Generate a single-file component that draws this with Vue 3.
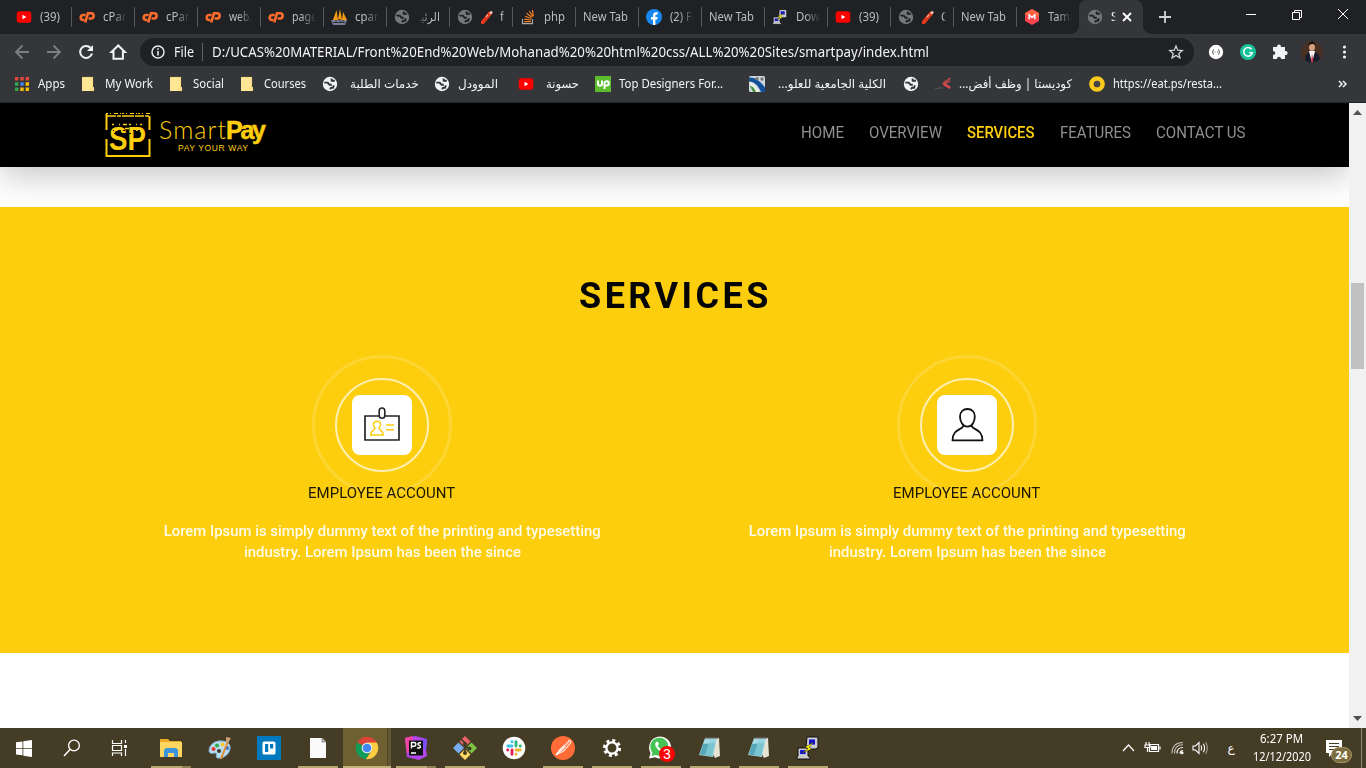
<script setup>
const tabs = [
  { icon: 'youtube', label: '(39)', w: 20 },
  { icon: 'cpanel', label: 'cPan', w: 26 },
  { icon: 'cpanel', label: 'cPan', w: 26 },
  { icon: 'cpanel', label: 'web.', w: 23 },
  { icon: 'cpanel', label: 'page', w: 25 },
  { icon: 'pma', label: 'cpan', w: 26 },
  { icon: 'globe-dim', label: 'الرئيـ', w: 22, rtl: true },
  { icon: 'globe-dim', label: 'f', w: 4, knife: true },
  { icon: 'stack', label: 'php', w: 21 },
  { label: 'New Tab', w: 45 },
  { icon: 'facebook', label: '(2) Fa', w: 28 },
  { label: 'New Tab', w: 45 },
  { icon: 'putty', label: 'Dow', w: 24 },
  { icon: 'youtube', label: '(39)', w: 20 },
  { icon: 'globe-dim', label: 'C', w: 7, knife: true },
  { label: 'New Tab', w: 45 },
  { icon: 'tamkeen', label: 'Tamk', w: 28 },
]

const bookmarks = [
  { icon: 'apps', label: 'Apps', box: 67, w: 27 },
  { icon: 'folder', label: 'My Work', box: 88, w: 48 },
  { icon: 'folder', label: 'Social', box: 71, w: 31 },
  { icon: 'folder', label: 'Courses', box: 82, w: 42 },
  { icon: 'globe', label: 'خدمات الطلبة', box: 112, w: 69, shift: 4 },
  { icon: 'globe', label: 'الموودل', box: 84, w: 40 },
  { icon: 'youtube', label: 'حسونة', box: 77, w: 33, shift: 4 },
  { icon: 'upwork', label: 'Top Designers For...', box: 154, w: 104 },
  { icon: 'college', label: 'الكلية الجامعية للعلو...', box: 154, w: 108, shift: 5 },
  { icon: 'globe', label: '', box: 32, w: 0 },
  { icon: 'codista', label: 'كوديستا | وظف أفض...', box: 154, w: 113 },
  { icon: 'ring', label: 'https://eat.ps/resta...', box: 140, w: 109 },
]

const menu = [
  { label: 'HOME', w: 43 },
  { label: 'OVERVIEW', w: 73 },
  { label: 'SERVICES', w: 67.5, on: true },
  { label: 'FEATURES', w: 71 },
  { label: 'CONTACT US', w: 89.5 },
]

const cards = ['badge', 'person']

const apps = [
  { icon: 'explorer', split: true },
  { icon: 'paint', idle: true },
  { icon: 'trello', idle: true },
  { icon: 'doc' },
  { icon: 'chrome', active: true },
  { icon: 'phpstorm', split: true },
  { icon: 'git' },
  { icon: 'slack', idle: true },
  { icon: 'postman' },
  { icon: 'gear' },
  { icon: 'whatsapp', count: 3 },
  { icon: 'notepad' },
  { icon: 'notepad' },
  { icon: 'putty' },
]

// Scales a label horizontally to the requested width.
const vFit = {
  mounted(el, { value }) {
    const natural = el.getBoundingClientRect().width
    if (natural && value) el.style.transform = `scaleX(${value / natural})`
  },
}
</script>

<template>
  <svg class="defs" width="0" height="0">
    <symbol id="youtube" viewBox="0 0 16 16"><rect x=".7" y="2.300" width="14.600" height="11.400" rx="2.600" fill="#f00" /><path d="M6.500 5.800v4.400L10.300 8z" fill="#fff" /></symbol>
    <symbol id="cpanel" viewBox="0 0 16 16"><g fill="none" stroke="#ff6c2c" stroke-width="2.6"><path d="M6.6 6H4.2a2.4 2.4 0 0 0 0 5h1.2" /><path d="M6.2 13.500 9 4.2h3a2.500 2.500 0 0 1 0 5.300H9.6" /></g></symbol>
    <symbol id="pma" viewBox="0 0 16 16"><path d="M5.500 1 2 11h5zM9 0 7 10l4 1zM12 3l-1 8h5z" fill="#f89c0e" /><path d="M0 11h16l-2 5H2z" fill="#7a7d9c" /><path d="M2 13.500h12M5 11v3M9 11v3M12 11v3" stroke="#222" stroke-width=".8" /></symbol>
    <symbol id="globe" viewBox="0 0 16 16"><circle cx="8" cy="8" r="7.200" fill="#f1f3f4" /><path d="M2.300 6.600h3.500l1.600 2.200h2.400M9.600 2.600v2.200h3.300M8 13.300l1-1.500h2l.9-2.400" fill="none" stroke="#35363a" stroke-width="1.900" stroke-linejoin="round" /></symbol>
    <symbol id="globe-dim" viewBox="0 0 16 16"><circle cx="8" cy="8" r="7.200" fill="#74777b" /><path d="M2.300 6.600h3.500l1.600 2.200h2.400M9.600 2.600v2.200h3.300M8 13.300l1-1.500h2l.9-2.400" fill="none" stroke="#202124" stroke-width="1.900" stroke-linejoin="round" /></symbol>
    <symbol id="knife" viewBox="0 0 12 14"><path d="M1.500 12.500 9 3.500" stroke="#e3371e" stroke-width="4" stroke-linecap="round" /><path d="M9 3.800 11 1.500" stroke="#f6c8b8" stroke-width="2.400" /><path d="m5 7 2-2.400" stroke="#ffb09c" stroke-width="1.300" /></symbol>
    <symbol id="stack" viewBox="0 0 16 16"><path d="M2.500 10v4.700h10V10" fill="none" stroke="#a9a9a9" stroke-width="1.200" /><path d="M4.200 12.700h6.600M4.300 10.200l6.700.8M5.100 7.300l6.300 2.200M6.600 4.200l5.300 4M9.300 2l3.600 5.500M12.400 1l1 6.300" stroke="#f48024" stroke-width="1.200" /></symbol>
    <symbol id="facebook" viewBox="0 0 16 16"><circle cx="8" cy="8" r="8" fill="#1687ee" /><path d="M7 16v-5.500H5V8h2V6.400c0-2.100 1.200-3.200 3-3.200l1.700.1v2.100h-1c-1 0-1.300.6-1.300 1.200V8h2.200l-.4 2.500H9.400V16z" fill="#fff" /></symbol>
    <symbol id="putty" viewBox="0 0 24 24"><path d="M11 1h10l1 1v9l-2 2h-9l-1-2z" fill="#c9c9c9" stroke="#111" /><path d="M12.500 3h7v6h-7z" fill="#11c" stroke="#eee" stroke-width=".7" /><path d="M2 12h9l1 1v7l2 1v2H1v-2l1-1z" fill="#c9c9c9" stroke="#111" /><path d="M3.600 13.600H10v5H3.600z" fill="#11c" stroke="#eee" stroke-width=".7" /><path d="m18 6-9 5 3 1.600L6 17l10-4-3-1.700z" fill="#fff200" stroke="#222" stroke-width=".5" /></symbol>
    <symbol id="tamkeen" viewBox="0 0 16 16"><path d="M8 0 15 4v8l-7 4-7-4V4z" fill="#f6454c" /><path d="M8 0 15 4v4L1 6V4z" fill="#ff773d" opacity=".6" /><path d="M5.200 10.300V6L8 8.600 10.800 6v4.300" fill="none" stroke="#fff" stroke-width="1.500" /></symbol>
    <symbol id="apps" viewBox="0 0 16 16"><path d="M1 1h3.400v3.400H1zM6.300 1h3.400v3.400H6.300zM11.600 1H15v3.400h-3.400z" fill="#e8453c" /><path d="M1 6.300h3.400v3.400H1z" fill="#34a853" /><path d="M6.300 6.300h3.400v3.400H6.300z" fill="#4285f4" /><path d="M11.600 6.300H15v3.400h-3.400zM6.300 11.600h3.400V15H6.300zM11.600 11.600H15V15h-3.400z" fill="#fbbc05" /><path d="M1 11.600h3.400V15H1z" fill="#34a853" /></symbol>
    <symbol id="folder" viewBox="0 0 16 16"><path d="M1 1h11v10h1v4H1z" fill="#ffe694" /><path d="M1.400 1.400h10.200V11.500h1v3.100H9.800v-3" fill="none" stroke="#f3d67a" stroke-width=".8" /></symbol>
    <symbol id="upwork" viewBox="0 0 16 16"><path d="M0 0h16v16H0z" fill="#5bbd2c" /><g fill="none" stroke="#fff" stroke-width="2"><path d="M3 4.500v3.300c0 2.700 4 2.700 4 0V4.500M9.500 13V7a2.200 2.200 0 1 1 2.200 2.600H9.500" /></g></symbol>
    <symbol id="college" viewBox="0 0 16 16"><rect width="16" height="16" rx="1.500" fill="#cbd6de" /><path d="M0 1.500c7-1 13 6 16 10V16h-4C9 9 5 5.500 0 5.500z" fill="#12509a" /><path d="M0 6c5 1 9 6 10 10H5z" fill="#eef3e6" /><path d="M1 10c3 0 5 3 6 6H4z" fill="#4a9445" /><circle cx="8" cy="2.800" r="1.700" fill="#777" /><circle cx="13" cy="3" r="1.700" fill="#777" /></symbol>
    <symbol id="codista" viewBox="0 0 16 16"><path d="M15.500 2 8.500 6.800l7 4.600M15 4.800 8.500 8.500l6.500 4" fill="none" stroke="#df4b51" stroke-width="1.200" /><path d="M0 12.500h4l1-2 1 2 2-1" fill="none" stroke="#505155" /></symbol>
    <symbol id="ring" viewBox="0 0 16 16"><circle cx="8" cy="8" r="5.600" fill="#45464a" stroke="#fcca1b" stroke-width="4.500" /></symbol>

    <symbol id="badge" viewBox="0 0 60 60"><path d="M13 21h34v24H13z" fill="#fff" stroke="#252529" stroke-width="1.700" /><rect x="27.200" y="13" width="5.600" height="10.300" rx="2.800" fill="#fff" stroke="#252529" stroke-width="1.600" /><path d="M23 33c-2.800-2.600-1.600-6.700 2-6.700s4.800 4.100 2 6.700c0 2.600 4.100 1.500 4.100 7H18.800c0-5.500 4.200-4.400 4.200-7zM34 30h8m-8 4.700h8" fill="none" stroke="#fdce0e" stroke-width="1.500" /></symbol>
    <symbol id="person" viewBox="0 0 60 60"><path d="M26.600 30.500c-1 4.800-10.900 2.800-11.100 14.800h30c-.2-12-10.100-10-11.100-14.800" fill="none" stroke="#111" stroke-width="1.700" /><path d="M30.500 14c4.500 0 7.300 3 7.300 7.500s-2.200 10.200-7.300 10.200-7.500-5.600-7.500-10.200 3-7.500 7.500-7.500z" fill="none" stroke="#111" stroke-width="1.800" /></symbol>

    <symbol id="explorer" viewBox="0 0 24 24"><path d="M1 3h8l2 2h11v15H1z" fill="#e9a924" /><path d="M1 6h22v15H1z" fill="#ffd562" /><path d="M5 21v-7l2-2h10l2 2v7h-4v-4H9v4z" fill="#3b94dc" /></symbol>
    <symbol id="paint" viewBox="0 0 24 24"><path d="M1 15C1 9 7 4 14 5c6 0 9 4 8 8-1 6-7 10-13 9-2-2 1-5-2-5-4 1-6 0-6-2z" fill="#b9ddf1" stroke="#79a9c8" /><circle cx="5.500" cy="13" r="2" fill="#e3342f" /><circle cx="9" cy="9.500" r="2" fill="#2fa84f" /><circle cx="14.500" cy="8.500" r="2" fill="#ffc928" /><circle cx="19" cy="12" r="2" fill="#426fd0" /><circle cx="11" cy="15" r="2" fill="#403923" /><path d="M13 23 20 5" stroke="#e28b32" stroke-width="2" /><path d="m18 6 0-5 5 1-3 5z" fill="#c9a47d" /></symbol>
    <symbol id="trello" viewBox="0 0 24 24"><path d="M0 0h24v24H0z" fill="#0079bf" /><rect x="5.500" y="5.500" width="13" height="13" rx="1.500" fill="#fff" /><path d="M8 8h3.200v8H8zM13 8h3.200v4.500H13z" fill="#0079bf" /></symbol>
    <symbol id="doc" viewBox="0 0 24 24"><path d="M4 2h12l4 4v16H4z" fill="#fafafa" /><path d="M16 2v4h4" fill="#bbb" stroke="#777" stroke-width=".7" /></symbol>
    <symbol id="chrome" viewBox="0 0 24 24"><path d="M12 12 2.300 6.400A11.200 11.200 0 0 1 21.700 6.400z" fill="#db4437" /><path d="M2.300 6.400a11.200 11.200 0 0 0 8.700 16.800L16 14z" fill="#0f9d58" /><path d="M21.700 6.400H12l4.600 8.200L11 23.200A11.200 11.200 0 0 0 21.700 6.400z" fill="#ffcd40" /><circle cx="12" cy="12" r="5.300" fill="#f1f1f1" /><circle cx="12" cy="12" r="4.300" fill="#4285f4" /></symbol>
    <symbol id="phpstorm" viewBox="0 0 24 24"><path d="M1 2 11 0l12 3-1 11 1 6-8 4L3 21z" fill="#b345f1" /><path d="M1 2 8 0l2 9-7 9z" fill="#f044a2" /><path d="m18 3 5 0-1 11-4-1z" fill="#7c4fff" /><path d="M5 4.500h14v15H5z" fill="#111" /><path d="M7.500 12.500v-6H10a1.800 1.800 0 0 1 0 3.700H7.500M17 7c-3-1-4 1.500-2 2.200 2.400.8 2 3.500-2 2.500M7 17h5" fill="none" stroke="#fff" stroke-width="1.400" /></symbol>
    <symbol id="git" viewBox="0 0 24 24"><path d="m12 0 5.500 5.500L12 11 6.500 5.500z" fill="#e9646a" /><path d="m18.500 6.500 5.500 5.500-5.500 5.500-5.500-5.500z" fill="#80c342" /><path d="m5.500 6.500 5.500 5.500-5.500 5.500L0 12z" fill="#79adf0" /><path d="m12 13 5.500 5.500L12 24l-5.500-5.500z" fill="#ffdb66" /><path d="m8 3 4 4v10M12 9l4 4" fill="none" stroke="#403923" stroke-width="1.600" /><circle cx="12" cy="8" r="2" fill="#403923" /><circle cx="12" cy="17" r="2" fill="#403923" /><circle cx="16.500" cy="12.500" r="2" fill="#403923" /></symbol>
    <symbol id="slack" viewBox="0 0 24 24"><circle cx="12" cy="12" r="11.300" fill="#fff" /><g stroke-width="2.900" stroke-linecap="round"><path d="M10 5.800v.1M5.800 10H10" stroke="#36c5f0" /><path d="M14 5.800V10M18.200 10h.1" stroke="#2eb67d" /><path d="M14 14h4.200M14 18.200v.1" stroke="#ecb22e" /><path d="M10 14v4.200M5.700 14h.1" stroke="#e01e5a" /></g></symbol>
    <symbol id="postman" viewBox="0 0 24 24"><circle cx="12" cy="12" r="12" fill="#ff6c37" /><path d="m5 19 4-6 8-7 1-2 2 1-1 3-6 7z" fill="#ff9a75" stroke="#fff" stroke-width=".900" /><path d="m5 19 9-9" stroke="#fff" stroke-width="1.500" /></symbol>
    <symbol id="gear" viewBox="0 0 24 24"><circle cx="12" cy="12" r="7.600" fill="none" stroke="#fff" stroke-width="3" stroke-dasharray="3 2.970" /><circle cx="12" cy="12" r="5.600" fill="none" stroke="#fff" stroke-width="2.300" /></symbol>
    <symbol id="whatsapp" viewBox="0 0 24 24"><path d="M0 22.500 1.500 17A11 11 0 1 1 6 21.300z" fill="#fff" /><path d="m2.500 20 1-3.500A9 9 0 1 1 7 19z" fill="#43c354" /><path d="M7 6c-3 3 3 11 9 10l1-3-3-1.500-1.500 1.500c-2-.7-3-2-3.800-3.600L10 8 8.500 5.500z" fill="#fff" /></symbol>
    <symbol id="notepad" viewBox="0 0 24 24"><path d="M7 2h14l1 18-5 2z" fill="#e6e3d5" /><path d="M7 2h12l-4 19-14-2z" fill="#a9dbe4" /><path d="m5 8 12-1-3 13-12-1.500z" fill="#55a8b8" /><path d="m12 3-5 16 7 1L18 4z" fill="#8fd0dc" opacity=".7" /><path d="M7 2h13" stroke="#666" stroke-width="1.300" /></symbol>
  </svg>

  <div class="screen">
    <header class="strip">
      <div v-for="(t, i) in tabs" :key="i" class="tab">
        <svg v-if="t.icon" class="fav"><use :href="'#' + t.icon" /></svg>
        <svg v-if="t.knife" class="knife"><use href="#knife" /></svg>
        <div class="clip" :class="{ plain: !t.icon, rtl: t.rtl, fade: t.icon && t.label !== '(39)' && t.label !== 'php' }">
          <span v-fit="t.w" class="lbl">{{ t.label }}</span>
        </div>
      </div>
      <div class="tab current">
        <svg class="fav"><use href="#globe-dim" /></svg>
        <div class="clip tiny fade"><span class="lbl">S</span></div>
        <svg class="cross" viewBox="0 0 10 10"><path d="m1 1 8 8m0-8L1 9" stroke="#fff" stroke-width="1.800" /></svg>
      </div>
      <svg class="plus" viewBox="0 0 12 12"><path d="M6 0v12M0 6h12" stroke="#d0d2d5" stroke-width="1.800" /></svg>
      <svg class="winctl" viewBox="0 0 110 14"><g fill="none" stroke="#fff"><path d="M1 7.500h10M47.500 5.500h7v7h-7zM49.500 5.500v-2h7v7h-2M93 2l10 10m0-10L93 12" /></g></svg>
    </header>

    <div class="toolbar">
      <svg class="nav" viewBox="0 0 128 28">
        <g fill="none" stroke="#7c7e82" stroke-width="1.800"><path d="M29 14H16m6.500-6.500L16 14l6.500 6.500M47 14h13m-6.500-6.500L60 14l-6.500 6.500" /></g>
        <path d="M90.500 9.700A6 6 0 1 0 92 15.500" fill="none" stroke="#f1f3f4" stroke-width="2" /><path d="M93 7v6h-6z" fill="#f1f3f4" />
        <path d="m111.500 14 6.700-6.500 6.700 6.500h-2v6.700h-9.400V14z" fill="none" stroke="#f1f3f4" stroke-width="2" />
      </svg>
      <div class="omni">
        <svg class="info" viewBox="0 0 14 14"><circle cx="7" cy="7" r="6" fill="none" stroke="#e8eaed" stroke-width="1.500" /><path d="M7 6v4.500M7 3.300v1.500" stroke="#e8eaed" stroke-width="1.600" /></svg>
        <div class="scheme"><span v-fit="20" class="lbl">File</span></div>
        <div class="url"><span v-fit="717" class="lbl">D:/UCAS%20MATERIAL/Front%20End%20Web/Mohanad%20%20html%20css/ALL%20%20Sites/smartpay/index.html</span></div>
        <svg class="star" viewBox="0 0 16 16"><path d="m8 2 1.700 4.200 4.600.300-3.500 2.900 1.100 4.500L8 11.500l-3.900 2.400 1.100-4.500L1.700 6.500l4.600-.3z" fill="none" stroke="#d0d2d5" stroke-width="1.300" /></svg>
      </div>
      <svg class="ext" viewBox="0 0 160 28">
        <circle cx="14" cy="14" r="7.200" fill="#fff" /><path d="M12 11.500c-2 0 0 2.500-2 2.500 2 0 0 2.500 2 2.500m4-5c2 0 0 2.500 2 2.500-2 0 0 2.500-2 2.500M12.500 14h1m1.500 0h1" fill="none" stroke="#555" stroke-width=".9" />
        <circle cx="46" cy="14" r="8" fill="#15c39a" /><path d="M49.500 11.300a4.300 4.300 0 1 0 .7 3.500h-3" fill="none" stroke="#fff" stroke-width="1.500" />
        <path d="M71 9h4c-.5-3.500 4.500-3.500 4 0h4v4c3.500-.5 3.500 4.500 0 4v4h-4c0-3-4-3-4 0h-4v-4c3 0 3-4 0-4z" fill="#f1f3f4" />
        <g><circle cx="110" cy="14" r="10.700" fill="#4a3022" /><path d="M103 22c0-6 3-8 7-8s7 2 8 7c-3 4-11 5-15 1z" fill="#171b2b" /><path d="m107 13 3 12 3-12z" fill="#fff" /><path d="m110 15-1 9h2.500z" fill="#c62b48" /><ellipse cx="110" cy="9" rx="3" ry="4" fill="#d59f82" /><path d="M106.500 8c0-6 7-6 7 0-2-3-5-2-7 0z" fill="#1a1411" /></g>
        <g fill="#f1f3f4"><circle cx="142.500" cy="9" r="1.600" /><circle cx="142.500" cy="14" r="1.600" /><circle cx="142.500" cy="19" r="1.600" /></g>
      </svg>
    </div>

    <div class="marks">
      <div v-for="(b, i) in bookmarks" :key="i" class="mark" :style="{ width: b.box + 'px' }">
        <svg class="bm"><use :href="'#' + b.icon" /></svg>
        <span v-fit="b.w" class="lbl" :style="{ marginLeft: (b.shift || 0) + 'px' }" :dir="/[\u0600-\u06ff]/.test(b.label) ? 'rtl' : 'ltr'">{{ b.label }}</span>
      </div>
      <svg class="more" viewBox="0 0 10 8"><path d="m1 1 3 3-3 3m4-6 3 3-3 3" fill="none" stroke="#f1f3f4" stroke-width="1.500" /></svg>
    </div>

    <div class="view">
      <div class="page">
        <nav class="topbar">
          <svg class="logo" viewBox="0 0 162 46">
            <path d="M1.500 18V2m43 16V4M1.500 27v17h43V27" fill="none" stroke="#fdce0e" stroke-width="2" />
            <path d="M1 1.500h44" stroke="#fdce0e" stroke-width="1" stroke-dasharray="2 2 1 3 4 2 1 1" />
            <path d="M2 4h42" stroke="#fdce0e" stroke-width="1.600" stroke-dasharray="9 1 4 1 12 1" />
            <text x="4" y="38" class="sp" textLength="37" lengthAdjust="spacingAndGlyphs">SP</text>
            <path d="M4 14.500h36M3 18.500h34M9 21.500h26" stroke="#000" stroke-width="1.200" stroke-dasharray="2 3 1 4 3 2" />
            <path d="M7 12.500h30M9 16.500h28" stroke="#fdce0e" stroke-width="1.400" stroke-dasharray="2 5 1 3 4 2" />
            <text x="54" y="27" class="thin" textLength="67">Smart</text>
            <text x="121" y="27" class="fat" textLength="40">Pay</text>
            <text x="73" y="39" class="tag" textLength="70">PAY YOUR WAY</text>
          </svg>
          <ul class="menu">
            <li v-for="m in menu" :key="m.label" :class="{ on: m.on }" :style="{ width: m.w + 'px' }"><span v-fit="m.w" class="lbl">{{ m.label }}</span></li>
          </ul>
        </nav>
        <section class="services">
          <h2><span v-fit="193" class="lbl">SERVICES</span></h2>
          <div class="cards">
            <article v-for="c in cards" :key="c" class="card">
              <div class="halo"><div class="circle"><svg class="tile"><use :href="'#' + c" /></svg></div></div>
              <h3><span v-fit="147" class="lbl">EMPLOYEE ACCOUNT</span></h3>
              <p><span v-fit="437" class="lbl">Lorem Ipsum is simply dummy text of the printing and typesetting</span></p>
              <p><span v-fit="277" class="lbl">industry. Lorem Ipsum has been the since</span></p>
            </article>
          </div>
        </section>
      </div>
      <div class="scroll">
        <svg class="arrow" viewBox="0 0 9 5"><path d="M0 5h9L4.500 0z" fill="#505050" /></svg>
        <div class="thumb"></div>
        <svg class="arrow" viewBox="0 0 9 5"><path d="M0 0h9L4.500 5z" fill="#505050" /></svg>
      </div>
    </div>

    <footer class="taskbar">
      <svg class="sys" viewBox="0 0 147 40">
        <path d="m16 14.300 6.500-.9V20H16zm7.300-1L32 12v8h-8.700zM16 20.800h6.500v6.500l-6.500-.9zm7.300 0H32V29l-8.700-1.300z" fill="#fff" />
        <circle cx="74" cy="17.500" r="5.400" fill="none" stroke="#fff" stroke-width="1.300" /><path d="m70 21.500-6 6.500" stroke="#fff" stroke-width="1.500" />
        <path d="M112.500 12v3.500h9V12M112.500 28v-3h9v3M112.500 17.500h9v5h-9zM125.500 12v3m0 6v7" fill="none" stroke="#fff" stroke-width="1.200" /><path d="M124 17h3v3h-3z" fill="#fff" />
      </svg>
      <div v-for="(a, i) in apps" :key="i" class="app" :class="{ idle: a.idle, active: a.active, split: a.split }">
        <svg class="ico"><use :href="'#' + a.icon" /></svg>
        <span v-if="a.count" class="count">{{ a.count }}</span>
      </div>
      <svg class="tray" viewBox="0 0 90 20">
        <g fill="none" stroke="#fff" stroke-width="1.200"><path d="m1 13 5.500-6 5.500 6" /><path d="M27.500 6.500h9v7h-9zM38 8.500v3M24 4v3m3-3v3m-4 0h5v2.500h-5zm2.500 2.500v4.500" /></g><path d="M29 8h6v4h-6z" fill="#fff" />
        <g fill="none" stroke="#fff" stroke-width="1.100"><path d="M58 15.500c0-2 1-3 3-3M55 15.500c0-4 2-6 6-6" /><path d="M52.500 15.500c0-6 3-8.800 8.500-8.800M50 15.500C50 8 54 4.500 61 4.500" opacity=".65" /></g><circle cx="60" cy="14.800" r="1.500" fill="#fff" />
        <g fill="none" stroke="#fff" stroke-width="1.100"><path d="M71 8h2.500l3.500-3.500v11L73.500 12H71zM79 7.500q1.500 2.500 0 5M81.300 5.800q2.600 4.200 0 8.400" /><path d="M83.500 4q3.700 6 0 12" opacity=".5" /></g>
      </svg>
      <span class="lang">ع</span>
      <div class="clock"><div><span v-fit="43" class="lbl">6:27 PM</span></div><div><span v-fit="58" class="lbl">12/12/2020</span></div></div>
      <div class="action">
        <svg viewBox="0 0 16 17"><path d="M0 0h16v13h-9l-4 4v-4H0z" fill="#fff" /><path d="M3 3.500h10M3 6.500h10M3 9.500h6" stroke="#453c26" /></svg>
        <span class="pill">24</span>
      </div>
      <i class="peek"></i>
    </footer>
  </div>
</template>

<style>
body { margin: 0; overflow: hidden; }
</style>

<style scoped>
* { box-sizing: border-box; }
svg { display: block; flex: none; }
.defs { position: absolute; }
.screen { width: 1366px; height: 768px; display: flex; flex-direction: column; overflow: hidden; background: #fff; font-family: "Noto Sans", "DejaVu Sans", sans-serif; font-size: 12px; }
.lbl { display: inline-block; white-space: nowrap; transform-origin: left center; }
.strip { height: 34px; display: flex; flex: none; background: #202124; padding-left: 8px; }
.tab { width: 63px; height: 34px; display: flex; align-items: center; padding-left: 8px; color: #b9bcc1; flex: none; background: linear-gradient(#56585c, #56585c) left 7px / 1px 20px no-repeat; position: relative; }
.tab:first-child { background: none; }
.fav { width: 16px; height: 16px; margin-right: 8px; }
.knife { width: 12px; height: 14px; margin-right: 7px; }
.clip { flex: 1; margin-right: 7px; overflow: hidden; line-height: 20px; height: 20px; }
.plain { margin-right: 2px; }
.clip.fade { -webkit-mask-image: linear-gradient(90deg, #000 40%, transparent); mask-image: linear-gradient(90deg, #000 40%, transparent); }
.clip.rtl { -webkit-mask-image: linear-gradient(270deg, #000 50%, transparent); mask-image: linear-gradient(270deg, #000 50%, transparent); }
.tab.current { width: 64px; background: #35363a; border-radius: 8px 8px 0 0; }
.current::before, .current::after { content: ""; position: absolute; bottom: 0; width: 8px; height: 8px; }
.current::before { left: -8px; background: radial-gradient(circle at 0 0, transparent 7.5px, #35363a 8px); }
.current::after { right: -8px; background: radial-gradient(circle at 100% 0, transparent 7.5px, #35363a 8px); }
.clip.tiny { flex: none; width: 5px; margin-right: 6px; color: #fff; }
.cross { width: 10px; height: 10px; }
.plus { width: 12px; height: 12px; margin: 11px 0 0 16px; }
.winctl { width: 110px; height: 14px; margin: 7px 0 0 74px; }

.toolbar { height: 35px; flex: none; display: flex; align-items: center; background: #35363a; color: #f1f3f4; padding-top: 1px; }
.nav { width: 128px; height: 28px; margin-right: 12px; }
.omni { width: 1054px; height: 28px; border-radius: 14px; background: #202124; display: flex; align-items: center; padding: 0 10px 0 11px; font-size: 13.5px; line-height: 26px; }
.info { width: 14px; height: 14px; }
.scheme { width: 29px; height: 18px; line-height: 18px; margin: 0 9px; border-right: 1px solid #5f6368; }
.url { flex: 1; height: 26px; }
.star { width: 16px; height: 16px; }
.ext { width: 160px; height: 28px; margin-left: 8px; }

.marks { height: 34px; flex: none; background: #35363a; border-bottom: 1px solid #242528; display: flex; align-items: center; padding: 0 0 4px 14px; color: #f1f3f4; }
.mark { display: flex; align-items: center; flex: none; white-space: nowrap; line-height: 20px; }
.bm { width: 16px; height: 16px; margin-right: 8px; }
.more { width: 10px; height: 8px; margin-left: 109px; }

.view { display: flex; height: 625px; flex: none; }
.page { width: 1349px; font-family: Roboto, sans-serif; overflow: hidden; }
.topbar { height: 64px; background: #000; display: flex; box-shadow: 0 8px 34px rgba(0, 0, 0, .24); padding: 9px 104px 0 105px; justify-content: space-between; position: relative; }
.logo { width: 162px; height: 46px; fill: #fdce0e; }
.sp { font: 700 34px "Liberation Sans", sans-serif; }
.thin { font: 300 25px Lato, sans-serif; }
.fat { font: 700 25px "Liberation Sans", sans-serif; stroke: #fdce0e; stroke-width: .5px; }
.tag { font: 400 8.5px "Liberation Sans", sans-serif; }
.menu { list-style: none; display: flex; gap: 25px; margin: 0; padding: 10px 0 0; font-size: 16px; line-height: 22px; color: #909090; }
.menu .on { color: #fdce0e; font-weight: 500; }
.services { position: relative; margin-top: 40px; height: 446px; background: #fdce0e; padding-top: 64px; }
h2 { margin: 0 auto; width: 192px; font-size: 36px; font-weight: 700; letter-spacing: 3.5px; line-height: 50px; color: #050505; }
.cards { width: 1170px; margin: 34px auto 0; display: flex; }
.card { width: 585px; text-align: center; display: flex; flex-direction: column; align-items: center; }
.halo { width: 140px; height: 140px; border: 3px solid rgba(255, 255, 255, .16); border-radius: 50%; display: grid; place-items: center; }
.circle { width: 94px; height: 94px; border: 2px solid rgba(255, 255, 255, .68); border-radius: 50%; display: grid; place-items: center; }
.tile { width: 60px; height: 60px; background: #fff; border-radius: 8px; }
h3 { margin: -12px 0 18px; font-size: 15px; font-weight: 400; line-height: 20px; color: #1c1705; position: relative; }
p { margin: 0; font-size: 15px; line-height: 21px; font-weight: 500; color: #fffbe9; }
h3 .lbl, p .lbl { transform-origin: center; }

.scroll { width: 17px; background: #f1f1f1; display: flex; flex-direction: column; align-items: center; padding: 7px 0; }
.arrow { width: 9px; height: 5px; }
.thumb { width: 13px; height: 86px; background: #c1c1c1; margin: 168px 0 auto; }

.taskbar { height: 40px; flex: none; background: #453c26; display: flex; color: #fff; }
.sys { width: 147px; height: 40px; }
.app { width: 49px; height: 40px; flex: none; display: grid; place-items: center; padding-right: 2px; position: relative; background: linear-gradient(#b9a771, #b9a771) 4px 38px / 40px 2px no-repeat; }
.app.idle { background: none; }
.app.split { background: linear-gradient(#b9a771, #b9a771) 4px 38px / 31px 2px no-repeat, linear-gradient(#8d7e53, #8d7e53) 35px 38px / 9px 2px no-repeat; }
.app.active { background: linear-gradient(#c4b27b, #c4b27b) 0 38px / 48px 2px no-repeat, linear-gradient(90deg, #6f6032 44px, #4e4426 44px, #4e4426 45px, #655830 45px) 0 0 / 48px 100% no-repeat; }
.ico { width: 24px; height: 24px; }
.count { position: absolute; left: 22px; top: 18px; width: 16px; height: 16px; border-radius: 50%; background: #f00; font: 14px/16px "Liberation Sans", sans-serif; text-align: center; }
.tray { width: 90px; height: 20px; margin: 10px 0 0 289px; }
.lang { width: 14px; margin: 10px 14px 0 12px; line-height: 20px; text-align: center; }
.clock { width: 60px; line-height: 18px; padding-top: 2px; display: flex; flex-direction: column; align-items: center; }
.clock .lbl { transform-origin: center; }
.action { width: 28px; margin: 12px 0 0 14px; position: relative; }
.action svg { width: 16px; height: 17px; }
.pill { position: absolute; left: 5px; top: 7px; width: 21px; height: 16px; border-radius: 8px; background: #7c6b3e; border: 1px solid #a39467; font: 700 11px/14px "Noto Sans", sans-serif; text-align: center; }
.peek { width: 1px; background: #8c8676; margin-left: 7px; }
</style>
